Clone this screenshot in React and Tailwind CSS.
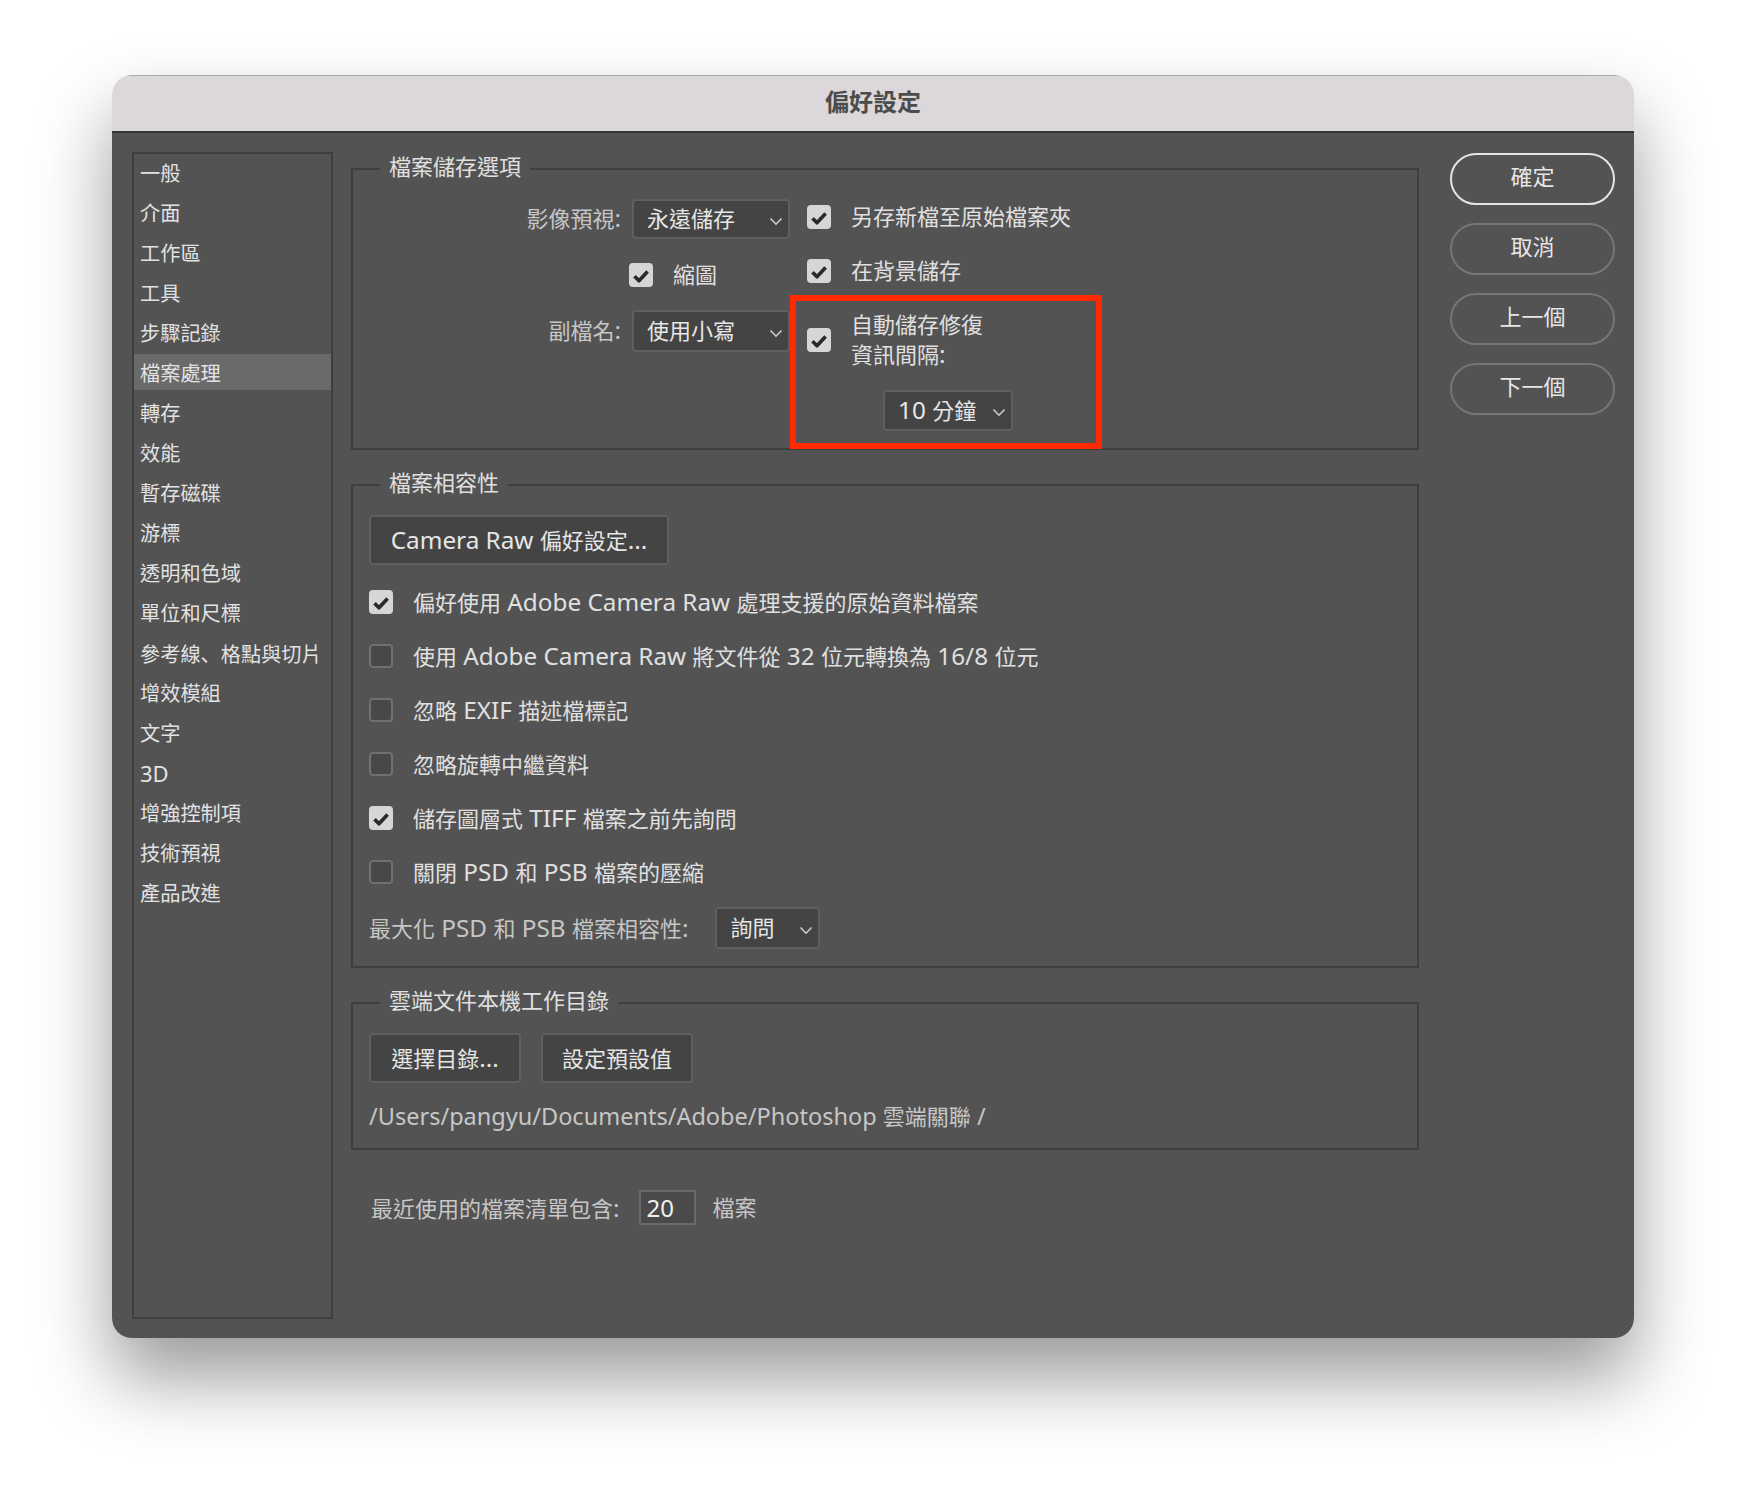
import React from "react";

const navItems = [
  "一般", "介面", "工作區", "工具", "步驟記錄", "檔案處理", "轉存", "效能", "暫存磁碟", "游標",
  "透明和色域", "單位和尺標", "參考線、格點與切片", "增效模組", "文字", "3D", "增強控制項", "技術預視", "產品改進",
];

const compatRows = [
  { label: "偏好使用 Adobe Camera Raw 處理支援的原始資料檔案", checked: true },
  { label: "使用 Adobe Camera Raw 將文件從 32 位元轉換為 16/8 位元", checked: false },
  { label: "忽略 EXIF 描述檔標記", checked: false },
  { label: "忽略旋轉中繼資料", checked: false },
  { label: "儲存圖層式 TIFF 檔案之前先詢問", checked: true },
  { label: "關閉 PSD 和 PSB 檔案的壓縮", checked: false },
];

// Latin runs sit a little larger than the CJK glyphs in the reference
const Mix = ({ text, latin = "text-[24.3px]" }) =>
  text.split(/([\x00-\x7F]+|、)/).map((part, i) => {
    if (part === "、") return <span key={i} className="font-['Noto_Sans_CJK_SC']">{part}</span>;
    return /^[\x00-\x7F]+$/.test(part) ? (
      <span key={i} className={latin}>{part}</span>
    ) : (
      part
    );
  });

const Check = ({ checked = true }) =>
  checked ? (
    <span className="flex h-6 w-6 shrink-0 items-center justify-center rounded-[4px] bg-[#d6d6d6]">
      <svg viewBox="0 0 24 24" className="h-6 w-6" fill="none" stroke="#2a2a2a" strokeWidth="3.6" strokeLinejoin="round">
        <path d="M5.5 13.2 10 17.8 18.6 8.6" />
      </svg>
    </span>
  ) : (
    <span className="h-6 w-6 shrink-0 rounded-[4px] border-2 border-[#707070] bg-[#484848]" />
  );

const Select = ({ value, className }) => (
  <div className={`flex items-center rounded-[4px] border-2 border-[#5f5f5f] bg-[#444444] pl-[13px] pr-[5px] text-[#e6e6e6] ${className}`}>
    <span className="pb-[2px]"><Mix text={value} /></span>
    <svg viewBox="0 0 14 9" className="ml-auto mt-1 h-[9px] w-[14px]" fill="none" stroke="#d0d0d0" strokeWidth="1.5">
      <path d="M1.5 1.5 7 7.2 12.5 1.5" />
    </svg>
  </div>
);

const FlatButton = ({ label, className }) => (
  <button className={`flex h-[50px] items-center justify-center rounded-[4px] border-2 border-[#5f5f5f] bg-[#444444] text-[#e6e6e6] ${className}`}>
    <span><Mix text={label} /></span>
  </button>
);

const Group = ({ title, className, children }) => (
  <fieldset className={`border-2 border-[#3e3e3e] ${className}`}>
    <legend className="ml-[27px] h-8 px-[9px] text-[22px] leading-[26px] text-[#e0e0e0]">{title}</legend>
    {children}
  </fieldset>
);

const PillButton = ({ label, primary }) => (
  <button
    className={`h-[52px] w-[165px] rounded-full border-2 pb-[6px] text-[22px] text-[#e6e6e6] ${
      primary ? "border-[#e4e4e4]" : "border-[#767676]"
    }`}
  >
    {label}
  </button>
);

export default function App() {
  return (
    <div className="h-[1486px] w-full overflow-hidden bg-white pl-[112px] pt-[75px] font-['Noto_Sans','Noto_Sans_CJK_TC',sans-serif]">
      <div className="flex h-[1263px] w-[1522px] flex-col overflow-hidden rounded-[20px] shadow-[0_40px_75px_rgba(0,0,0,0.4)]">
        {/* Title bar */}
        <div className="flex h-[58px] shrink-0 items-center justify-center border-b-2 border-t border-b-[#353535] border-t-[#a9a9a9] bg-[#dcd7da] pb-[3px] text-[24px] font-bold text-[#4c4c4c]">
          偏好設定
        </div>

        <div className="flex flex-1 bg-[#535353] pl-5 pt-[19px] text-[22px] leading-[31px]">
          {/* Sidebar */}
          <nav className="flex h-[1167px] w-[201px] shrink-0 flex-col gap-1 border-2 border-[#3e3e3e] text-[20.2px] text-[#e2e2e2]">
            {navItems.map((item) => (
              <div
                key={item}
                className={`flex h-9 shrink-0 items-center whitespace-nowrap pl-[6px] pt-[3px] ${item === "檔案處理" ? "bg-[#6a6a6a]" : ""}`}
              >
                <span><Mix text={item} latin="text-[22px]" /></span>
              </div>
            ))}
          </nav>

          {/* Main column */}
          <div className="ml-[18px] mt-px w-[1068px] shrink-0">
            <Group title="檔案儲存選項" className="h-[297px]">
              <div className="grid grid-cols-[437px_1fr] gap-x-[17px] pt-[14px]">
                <div className="flex flex-col">
                  <div className="flex items-center justify-end gap-[11px]">
                    <span className="pb-[2px] text-[#c6c6c6]"><Mix text="影像預視:" /></span>
                    <Select value="永遠儲存" className="h-10 w-[158px]" />
                  </div>
                  <div className="ml-[276px] mt-6 flex h-6 items-center gap-5 text-[#e0e0e0]">
                    <Check />
                    <span className="pb-[2px]">縮圖</span>
                  </div>
                  <div className="mt-[23px] flex items-center justify-end gap-[11px]">
                    <span className="pb-[2px] text-[#c6c6c6]"><Mix text="副檔名:" /></span>
                    <Select value="使用小寫" className="h-[42px] w-[158px]" />
                  </div>
                </div>

                <div className="flex flex-col text-[#e0e0e0]">
                  <div className="mt-[6px] flex h-6 items-center gap-5">
                    <Check />
                    <span className="pb-[2px]">另存新檔至原始檔案夾</span>
                  </div>
                  <div className="mt-[30px] flex h-6 items-center gap-5">
                    <Check />
                    <span className="pb-[2px]">在背景儲存</span>
                  </div>
                  <div className="relative mt-[27px]">
                    <div className="flex h-[60px] items-center gap-5 leading-[30px]">
                      <Check />
                      <span className="pb-[2px]">
                        自動儲存修復
                        <br />
                        <Mix text="資訊間隔:" />
                      </span>
                    </div>
                    <Select value="10 分鐘" className="ml-[76px] mt-5 h-[41px] w-[130px]" />
                    {/* highlight drawn on top of the form */}
                    <div className="absolute -left-[17px] -top-[15px] h-[154px] w-[312px] border-[6px] border-[#ff2a00]" />
                  </div>
                </div>
              </div>
            </Group>

            <Group title="檔案相容性" className="mt-[19px] h-[499px]">
              <div className="flex flex-col pl-4 pt-[14px] text-[#e0e0e0]">
                <FlatButton label="Camera Raw 偏好設定..." className="w-[300px]" />
                <div className="mt-[25px] flex flex-col gap-[30px]">
                  {compatRows.map((row) => (
                    <div key={row.label} className="flex h-6 items-center gap-5 whitespace-nowrap">
                      <Check checked={row.checked} />
                      <span><Mix text={row.label} /></span>
                    </div>
                  ))}
                </div>
                <div className="mt-[23px] flex items-center gap-[27px]">
                  <span className="text-[#c6c6c6]"><Mix text="最大化 PSD 和 PSB 檔案相容性:" /></span>
                  <Select value="詢問" className="h-[42px] w-[105px]" />
                </div>
              </div>
            </Group>

            <Group title="雲端文件本機工作目錄" className="mt-[19px] h-[163px]">
              <div className="pl-4 pt-[14px]">
                <div className="flex gap-5">
                  <FlatButton label="選擇目錄..." className="w-[152px]" />
                  <FlatButton label="設定預設值" className="w-[152px]" />
                </div>
                <div className="mt-[18px] whitespace-nowrap text-[#c6c6c6]">
                  <Mix text="/Users/pangyu/Documents/Adobe/Photoshop 雲端關聯 /" latin="text-[23.5px]" />
                </div>
              </div>
            </Group>

            <div className="ml-5 mt-10 flex items-center text-[#c6c6c6]">
              <span><Mix text="最近使用的檔案清單包含:" /></span>
              <div className="ml-[19px] flex h-[35px] w-[57px] items-center border-2 border-[#6a6a6a] bg-[#4a4a4a] pl-[6px] text-[24px] text-[#f0f0f0]">
                20
              </div>
              <span className="ml-[17px]">檔案</span>
            </div>
          </div>

          {/* Dialog buttons */}
          <div className="ml-[31px] mt-px flex flex-col gap-[18px]">
            <PillButton label="確定" primary />
            <PillButton label="取消" />
            <PillButton label="上一個" />
            <PillButton label="下一個" />
          </div>
        </div>
      </div>
    </div>
  );
}
